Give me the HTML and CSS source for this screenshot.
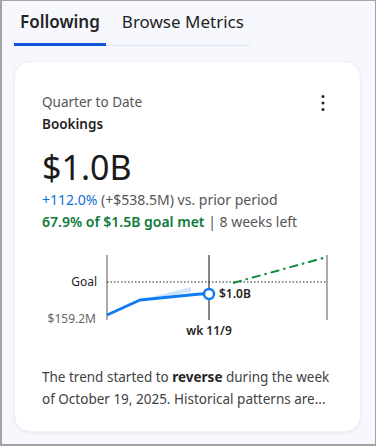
FILE: index.html
```html
<!DOCTYPE html>
<html>
<head>
<meta charset="utf-8">
<link rel="stylesheet" href="styles.css">
</head>
<body>
<div class="frame">
  <div class="tabs">
    <div class="tab active">Following</div>
    <div class="tab">Browse Metrics</div>
  </div>
  <div class="card">
    <div class="head">
      <div class="titles">
        <div class="period">Quarter to Date</div>
        <div class="metric">Bookings</div>
      </div>
      <svg class="more" width="6" height="18" viewBox="0 0 6 18"><circle cx="3" cy="2.5" r="1.5"/><circle cx="3" cy="9" r="1.5"/><circle cx="3" cy="15.5" r="1.5"/></svg>
    </div>
    <div class="value">$1.0B</div>
    <div class="line"><span class="up">+112.0%</span> (+$538.5M) vs. prior period</div>
    <div class="line"><span class="goal">67.9% of $1.5B goal met</span> | 8 weeks left</div>
    <svg class="chart" width="290" height="92" viewBox="0 0 290 92">
      <line x1="65" y1="5" x2="65" y2="70" stroke="#8f8f8f" stroke-width="1.5"/>
      <line x1="167" y1="5" x2="167" y2="70" stroke="#5c5c5c" stroke-width="1.5"/>
      <line x1="285" y1="5" x2="285" y2="70" stroke="#8f8f8f" stroke-width="1.5"/>
      <line x1="65" y1="32" x2="285" y2="32" stroke="#242424" stroke-width="1" stroke-dasharray="1.5 2"/>
      <polygon points="98,50 149,37 149,42 120,47" fill="#cfe4fb"/>
      <polyline points="65,65 98,50 158,44 162,44" fill="none" stroke="#0f7cf5" stroke-width="3" stroke-linejoin="round"/>
      <circle cx="167" cy="44" r="5" fill="#fff" stroke="#0f7cf5" stroke-width="2.5"/>
      <line x1="191" y1="33" x2="285" y2="7" stroke="#108a3e" stroke-width="2" stroke-dasharray="9 4 2.5 4"/>
      <text x="55" y="36" text-anchor="end" class="t-dark">Goal</text>
      <text x="54" y="73" text-anchor="end" class="t-gray">$159.2M</text>
      <text x="177" y="48" class="t-bold">$1.0B</text>
      <text x="167" y="85" text-anchor="middle" class="t-bold">wk 11/9</text>
    </svg>
    <p class="summary">The trend started to <b>reverse</b> during the week of October 19, 2025. Historical patterns are...</p>
  </div>
</div>
</body>
</html>
```
FILE: styles.css
```css
html, body {
  margin: 0;
  padding: 0;
}
body {
  font-family: "Noto Sans", "Open Sans", sans-serif;
  color: #242424;
}
.frame {
  box-sizing: border-box;
  width: 376px;
  height: 446px;
  background: #f7f8fd;
  border: 1px solid #a3a3a3;
  border-left-width: 2px;
  border-bottom-width: 2px;
  padding: 0 12px 0 12px;
  overflow: hidden;
}
.tabs {
  display: flex;
  width: 236px;
  border-bottom: 1px solid #dce6f5;
}
.tab {
  font-size: 17px;
  line-height: 24px;
  padding: 9px 6px 9px 6px;
  border-bottom: 3px solid transparent;
  margin-bottom: -1px;
  color: #242424;
  white-space: nowrap;
}
.tab.active {
  font-weight: 600;
  border-bottom-color: #0f55d6;
}
.tab + .tab {
  padding-left: 16px;
}
.card {
  box-sizing: border-box;
  width: 347px;
  height: 371px;
  margin-top: 15px;
  background: #fff;
  border-radius: 16px;
  border: 1px solid #eef0f7;
  box-shadow: 0 1px 3px rgba(30, 40, 90, 0.08);
  padding: 30px 28px 0 27px;
}
.head {
  display: flex;
  justify-content: space-between;
  align-items: flex-start;
}
.period {
  font-size: 13.5px;
  line-height: 20px;
  color: #555;
}
.metric {
  font-size: 13.5px;
  line-height: 24px;
  font-weight: 600;
  color: #242424;
}
.more {
  fill: #242424;
  margin-top: 2px;
  margin-right: 6px;
}
.value {
  font-size: 34px;
  line-height: 43px;
  margin-top: 10px;
  color: #1a1a1a;
}
.line {
  font-size: 14px;
  line-height: 22px;
  color: #555;
}
.up {
  color: #1172d6;
}
.goal {
  color: #0e7a3a;
  font-weight: 600;
}
.chart {
  display: block;
  margin-top: 17px;
}
.chart text {
  font-family: "Noto Sans", "Open Sans", sans-serif;
  font-size: 12px;
}
.t-dark { fill: #242424; }
.t-gray { fill: #666; }
.t-bold { fill: #242424; font-weight: 600; }
.summary {
  margin: 24px 0 0 0;
  font-size: 13.5px;
  line-height: 22px;
  color: #424242;
}
.summary b {
  font-weight: 700;
  color: #242424;
}
```
